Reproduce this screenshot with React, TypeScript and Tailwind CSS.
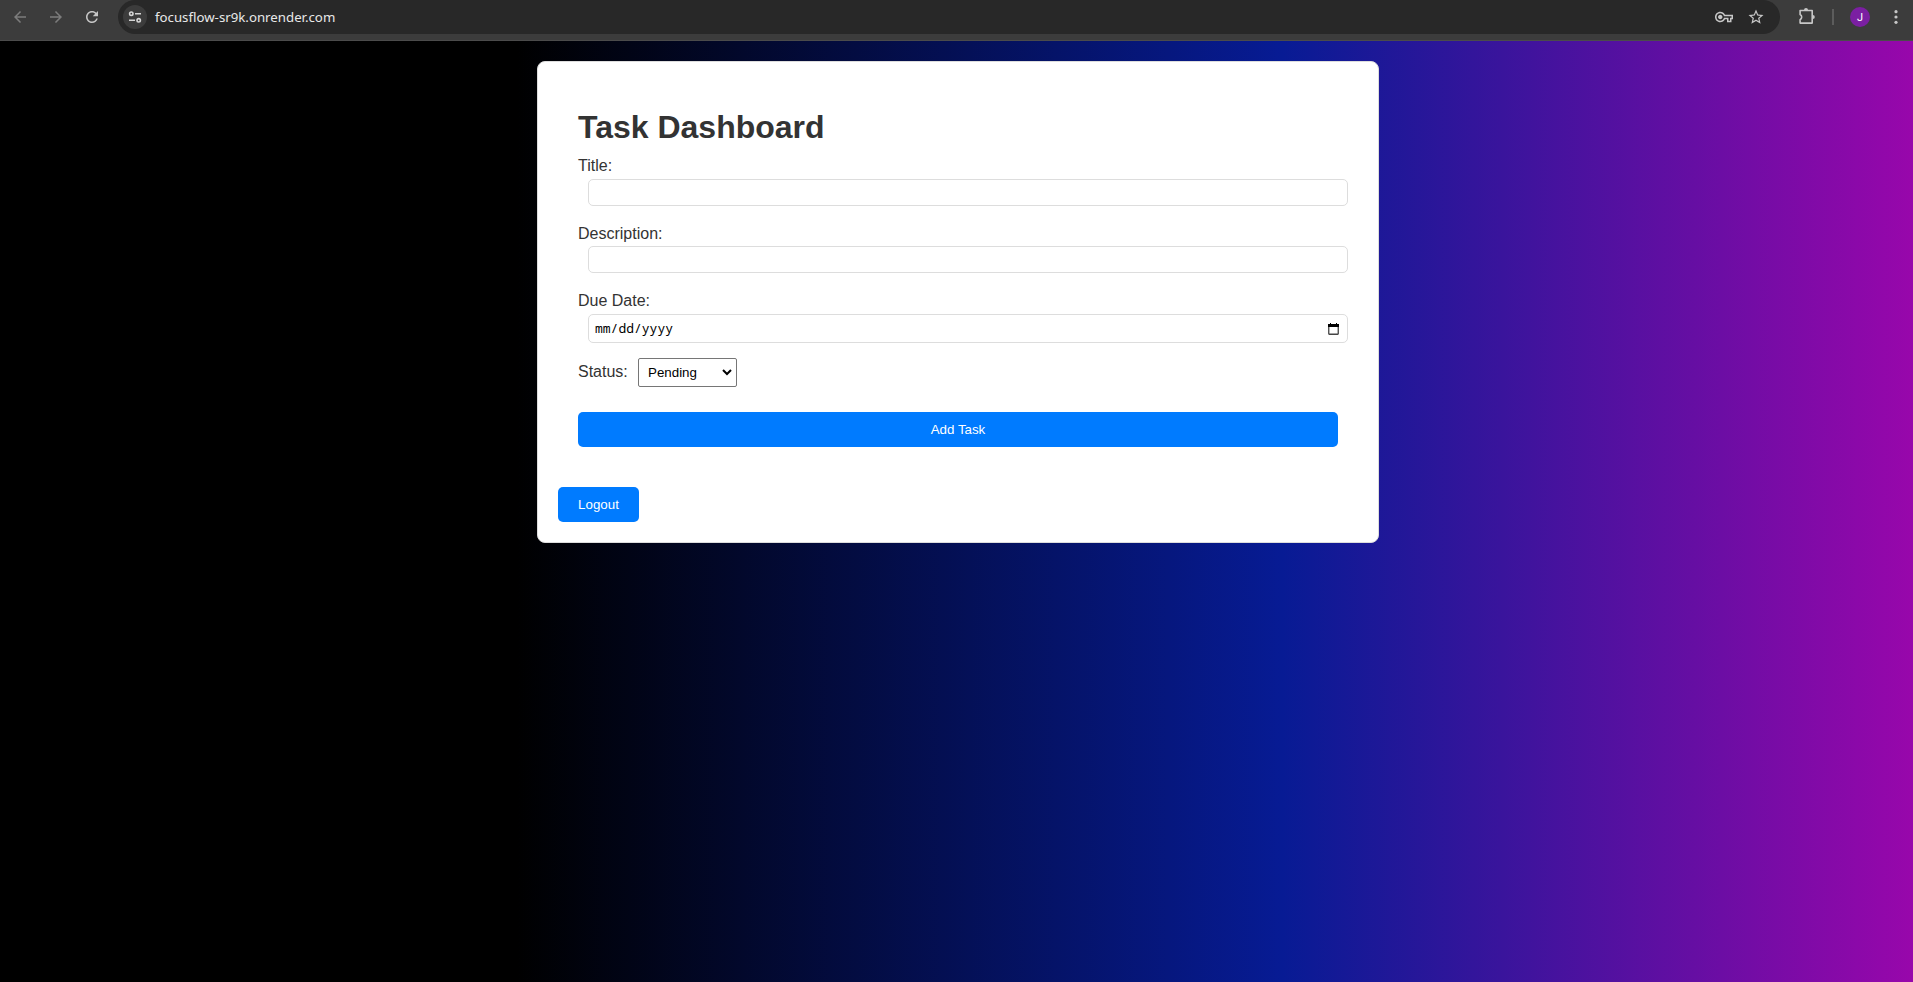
import React from "react";

const iconColor = "#c7c7c7";

function Glyph({ d, color = iconColor }: { d: string; color?: string }) {
  return (
    <svg width="18" height="18" viewBox="0 0 24 24" fill={color}>
      <path d={d} />
    </svg>
  );
}

function BrowserBar() {
  return (
    <header className="flex h-[41px] w-full shrink-0 items-start border-b border-[#4b4b4b] bg-[#3c3c3c]">
      <div className="flex h-[34px] w-[118px] items-center gap-[18px] pl-[11px]">
        <Glyph color="#7c7c7c" d="M20 11H7.83l5.59-5.59L12 4l-8 8 8 8 1.41-1.41L7.83 13H20v-2z" />
        <Glyph color="#7c7c7c" d="M12 4l-1.41 1.41L16.17 11H4v2h12.17l-5.58 5.59L12 20l8-8z" />
        <Glyph d="M17.65 6.35C16.2 4.9 14.21 4 12 4c-4.42 0-7.99 3.58-7.99 8s3.57 8 7.99 8c3.73 0 6.84-2.55 7.73-6h-2.08c-.82 2.33-3.04 4-5.65 4-3.31 0-6-2.69-6-6s2.69-6 6-6c1.66 0 3.14.69 4.22 1.78L13 11h7V4l-2.35 2.35z" />
      </div>
      <div className="flex h-[34px] w-[1662px] items-center rounded-[17px] bg-[#282828] pl-[5px] pr-[15px]">
        <div className="flex size-6 items-center justify-center rounded-full bg-[#3c3c3c]">
          <svg width="14" height="14" viewBox="0 0 14 14" fill="none" stroke="#d5d5d5" strokeWidth="1.6">
            <circle cx="3.3" cy="3.7" r="1.7" />
            <path d="M7 3.7h6M1 10.3h6" />
            <circle cx="10.7" cy="10.3" r="1.7" />
          </svg>
        </div>
        <span className="ml-2 grow font-['Noto_Sans',sans-serif] text-[13.25px] leading-5 text-[#e8e8e8]">
          focusflow-sr9k.onrender.com
        </span>
        <div className="flex items-center gap-[14px]">
          <Glyph d="M22 19h-6v-4h-2.68c-1.14 2.42-3.6 4-6.32 4-3.86 0-7-3.14-7-7s3.14-7 7-7c2.72 0 5.17 1.58 6.32 4H24v6h-2v4zm-4-2h2v-4h2v-2H11.94l-.23-.67C11.01 8.34 9.11 7 7 7c-2.76 0-5 2.24-5 5s2.24 5 5 5c2.11 0 4.01-1.34 4.71-3.33l.23-.67H18v4zM7 15c-1.65 0-3-1.35-3-3s1.35-3 3-3 3 1.35 3 3-1.35 3-3 3z" />
          <Glyph d="M22 9.24l-7.19-.62L12 2 9.19 8.63 2 9.24l5.46 4.73L5.82 21 12 17.27 18.18 21l-1.63-7.03L22 9.24zM12 15.4l-3.76 2.27 1-4.28-3.32-2.88 4.38-.38L12 6.1l1.71 4.04 4.38.38-3.32 2.88 1 4.28L12 15.4z" />
        </div>
      </div>
      <div className="flex h-[34px] items-center">
        <svg className="ml-[18px]" width="18" height="18" viewBox="0 0 18 18">
          <path
            d="M2.1 2.5h12.1v12.6H2.1v-3.4a2.9 2.9 0 0 0 0-5.2Z"
            fill="none"
            stroke={iconColor}
            strokeWidth="1.6"
            strokeLinejoin="round"
          />
          <path d="M6 2a2 2 0 0 1 4 0ZM14.8 7a2 2 0 0 1 0 4Z" fill={iconColor} />
        </svg>
        <div className="ml-4 h-4 w-[2px] bg-[#5c5c5c]" />
        <div className="ml-4 flex size-5 items-center justify-center rounded-full bg-[#7b1fa2] font-[Roboto,sans-serif] text-[11px] leading-none text-white">
          J
        </div>
        <svg className="ml-6" width="4" height="16" viewBox="0 0 4 16" fill={iconColor}>
          <circle cx="2" cy="2.7" r="1.6" />
          <circle cx="2" cy="8" r="1.6" />
          <circle cx="2" cy="13.3" r="1.6" />
        </svg>
      </div>
    </header>
  );
}

function Field({ label, children }: { label: string; children: React.ReactNode }) {
  return (
    <div>
      <label className="block h-[18px] text-base leading-[18px]">{label}</label>
      {children}
    </div>
  );
}

const inputClass =
  "ml-[10px] block w-[760px] rounded-[5px] border border-[#ddd] bg-white pl-[6px] pr-[5px]";

export default function App() {
  return (
    <div className="flex h-[982px] w-full flex-col overflow-hidden font-['Liberation_Sans',Arial,sans-serif]">
      <BrowserBar />
      <main className="flex grow flex-col items-center bg-[linear-gradient(90deg,#000_27%,#071b94_67%,#9807ab_100%)] pl-[3px] pt-5 text-[#333]">
        <section className="h-[482px] w-[842px] rounded-lg border border-[#ddd] bg-white p-5 pt-[47px]">
          <form className="px-5" onSubmit={(e) => e.preventDefault()}>
            <h1 className="h-[48px] text-[32px] font-bold leading-[37px]">Task Dashboard</h1>
            <Field label="Title:">
              <input className={`${inputClass} mt-[4px] mb-[19px] h-[27px]`} />
            </Field>
            <Field label="Description:">
              <input className={`${inputClass} mt-[3px] mb-[19px] h-[27px]`} />
            </Field>
            <Field label="Due Date:">
              <div className={`${inputClass} mb-[15px] mt-[4px] flex h-[29px] items-center justify-between`}>
                <span className="font-['Noto_Sans_Mono','DejaVu_Sans_Mono',monospace] text-[13px] text-black">
                  mm/dd/yyyy
                </span>
                <svg className="mr-[3px]" width="11" height="12" viewBox="0 0 11 12">
                  <rect x=".75" y="1.75" width="9.5" height="9.5" rx=".5" fill="none" stroke="#444" strokeWidth="1.3" />
                  <path d="M0 1h2V0h1v1h5V0h1v1h2v3H0z" fill="#000" />
                </svg>
              </div>
            </Field>
            <div className="flex h-[29px] items-center">
              <label className="w-[60px] pb-[2px] text-base leading-none">Status:</label>
              <div className="flex h-[29px] w-[99px] items-center justify-between rounded-[2px] border border-[#767676] bg-white pl-[9px] pr-[4px] text-[13.333px] text-black">
                <span>Pending</span>
                <svg width="10" height="7" viewBox="0 0 10 7" fill="none" stroke="#000" strokeWidth="2">
                  <path d="m1 1 4 4 4-4" />
                </svg>
              </div>
            </div>
            <button className="mt-[25px] block h-[35px] w-[760px] rounded-[5px] bg-[#007bff] text-[13.333px] text-white">
              Add Task
            </button>
          </form>
          <button className="mt-10 block h-[35px] w-[81px] rounded-[5px] bg-[#007bff] text-[13.333px] text-white">
            Logout
          </button>
        </section>
      </main>
    </div>
  );
}
